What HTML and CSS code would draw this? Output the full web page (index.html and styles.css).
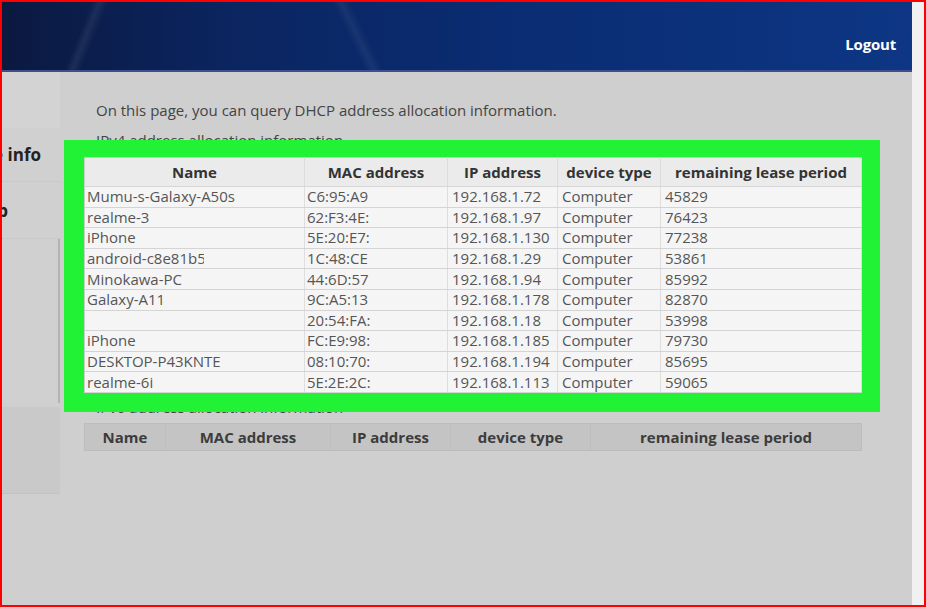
FILE: index.html
```html
<!DOCTYPE html>
<html lang="en">
<head>
    <meta charset="UTF-8">
    <meta name="viewport" content="width=device-width, initial-scale=1.0">
    <title>DHCP</title>
    <link rel="stylesheet" href="styles.css">
</head>
<body>
  <div class="frame">
    <div class="page">
      <div class="header">
        <a class="logout">Logout</a>
      </div>

      <div class="main">
        <div class="sidebar">
          <div class="side-top"></div>
          <div class="side-item info"><span>Device info</span></div>
          <div class="side-item setup"><span>Setup</span></div>
          <div class="side-scroll"></div>
          <div class="side-bottom"></div>
        </div>

        <div class="content">
          <p class="description">On this page, you can query DHCP address allocation information.</p>

          <div class="label">IPv4 address allocation information</div>
          <table class="lease-table highlight">
            <colgroup>
              <col style="width:220px">
              <col style="width:143px">
              <col style="width:110px">
              <col style="width:103px">
              <col style="width:201px">
            </colgroup>
            <thead>
              <tr>
                <th>Name</th>
                <th>MAC address</th>
                <th>IP address</th>
                <th>device type</th>
                <th>remaining lease period</th>
              </tr>
            </thead>
            <tbody>
              <tr><td>Mumu-s-Galaxy-A50s</td><td>C6:95:A9</td><td>192.168.1.72</td><td>Computer</td><td>45829</td></tr>
              <tr><td>realme-3</td><td>62:F3:4E:</td><td>192.168.1.97</td><td>Computer</td><td>76423</td></tr>
              <tr><td>iPhone</td><td>5E:20:E7:</td><td>192.168.1.130</td><td>Computer</td><td>77238</td></tr>
              <tr><td><span class="clip">android-c8e81b5</span></td><td>1C:48:CE</td><td>192.168.1.29</td><td>Computer</td><td>53861</td></tr>
              <tr><td>Minokawa-PC</td><td>44:6D:57</td><td>192.168.1.94</td><td>Computer</td><td>85992</td></tr>
              <tr><td>Galaxy-A11</td><td>9C:A5:13</td><td>192.168.1.178</td><td>Computer</td><td>82870</td></tr>
              <tr><td></td><td>20:54:FA:</td><td>192.168.1.18</td><td>Computer</td><td>53998</td></tr>
              <tr><td>iPhone</td><td>FC:E9:98:</td><td>192.168.1.185</td><td>Computer</td><td>79730</td></tr>
              <tr><td>DESKTOP-P43KNTE</td><td>08:10:70:</td><td>192.168.1.194</td><td>Computer</td><td>85695</td></tr>
              <tr><td>realme-6i</td><td>5E:2E:2C:</td><td>192.168.1.113</td><td>Computer</td><td>59065</td></tr>
            </tbody>
          </table>

          <div class="label label-v6">IPv6 address allocation information</div>
          <table class="v6-table">
            <colgroup>
              <col style="width:81px">
              <col style="width:165px">
              <col style="width:120px">
              <col style="width:140px">
              <col style="width:271px">
            </colgroup>
            <tr>
              <th>Name</th>
              <th>MAC address</th>
              <th>IP address</th>
              <th>device type</th>
              <th>remaining lease period</th>
            </tr>
          </table>
        </div>
      </div>
    </div>
    <div class="edge"></div>
  </div>
</body>
</html>
```

FILE: styles.css
```css
body {
  margin: 0;
  font-family: 'Open Sans', 'Noto Sans', sans-serif;
  background-color: #cfcfcf;
}

.frame {
  box-sizing: border-box;
  width: 926px;
  height: 607px;
  border: 2px solid #ff0000;
  display: flex;
  overflow: hidden;
}

.page {
  width: 910px;
  display: flex;
  flex-direction: column;
  background-color: #cfcfcf;
}

.edge {
  flex: 1;
  background-color: #f1f1f1;
}

/* header */
.header {
  flex-shrink: 0;
  height: 70px;
  box-sizing: border-box;
  border-bottom: 2px solid #3e4f8e;
  display: flex;
  justify-content: flex-end;
  align-items: flex-end;
  padding: 0 16px 16px 0;
  background:
    linear-gradient(112deg, transparent 9.6%, rgba(255,255,255,0.07) 10.4%, transparent 11.4%),
    linear-gradient(64deg, transparent 38.5%, rgba(255,255,255,0.06) 39.4%, transparent 40.4%),
    linear-gradient(90deg, #0b1940 0%, #0b2560 25%, #0a2c72 55%, #0d3684 100%);
}

.logout {
  color: #fff;
  font-weight: bold;
  font-size: 15px;
  line-height: 20px;
  letter-spacing: -0.2px;
}

.main {
  flex: 1;
  display: flex;
}

/* sidebar */
.sidebar {
  width: 58px;
  display: flex;
  flex-direction: column;
  overflow: hidden;
}

.side-top {
  height: 56px;
  background-color: #d3d3d3;
}

.side-item {
  height: 53px;
  display: flex;
  align-items: center;
  justify-content: flex-end;
  font-size: 17px;
  font-weight: bold;
  color: #222;
  white-space: nowrap;
  border-bottom: 1px dotted #c2c2c2;
  background-color: #d0d0d0;
}

.side-item span {
  flex-shrink: 0;
}

.side-item.info {
  padding-right: 19px;
}

.side-item.setup {
  padding-right: 52px;
  height: 56px;
}

.side-scroll {
  height: 164px;
  border-right: 2px solid #b3b3b3;
  background-color: #d0d0d0;
}

.side-bottom {
  height: 86px;
  margin-top: 4px;
  background-color: #c9c9c9;
  border-bottom: 1px dotted #bcbcbc;
}

/* content */
.content {
  flex: 1;
  padding: 28px 0 0 24px;
}

.description {
  margin: 0 0 0 12px;
  font-size: 15px;
  line-height: 20px;
  color: #444;
}

.label {
  margin: 10px 0 0 12px;
  font-size: 15px;
  line-height: 20px;
  color: #444;
}

.label-v6 {
  margin-top: 4px;
}

.lease-table {
  margin-top: 7px;
  width: 777px;
  table-layout: fixed;
  border-collapse: collapse;
  background-color: #f5f5f5;
  font-size: 15px;
  color: #555;
}

.highlight {
  position: relative;
  z-index: 1;
  border: 1px solid #cdcdcd;
  box-shadow: 0 1px 0 18px #22f236, -2px 1px 0 18px #22f236;
}

.lease-table th {
  height: 28px;
  padding: 0;
  font-weight: bold;
  color: #333;
  background-color: #ebebeb;
  border-right: 1px solid #dcdcdc;
  border-bottom: 1px solid #d6d6d6;
}

.lease-table td {
  height: 19.6px;
  line-height: 19px;
  padding: 0 0 0 2px;
  white-space: nowrap;
  overflow: hidden;
  border-right: 1px solid #dedede;
  border-bottom: 1px solid #d4d4d4;
}

.lease-table td:nth-child(n+3) {
  padding-left: 4px;
}

.clip {
  display: inline-block;
  width: 117px;
  overflow: hidden;
  vertical-align: top;
}

.v6-table {
  margin-top: 6px;
  width: 777px;
  table-layout: fixed;
  border-collapse: collapse;
  background-color: #c4c4c4;
  border: 1px solid #bcbcbc;
}

.v6-table th {
  height: 26px;
  padding: 0;
  font-size: 15px;
  font-weight: bold;
  color: #3c3c3c;
  border-right: 1px solid #bdbdbd;
}
```
